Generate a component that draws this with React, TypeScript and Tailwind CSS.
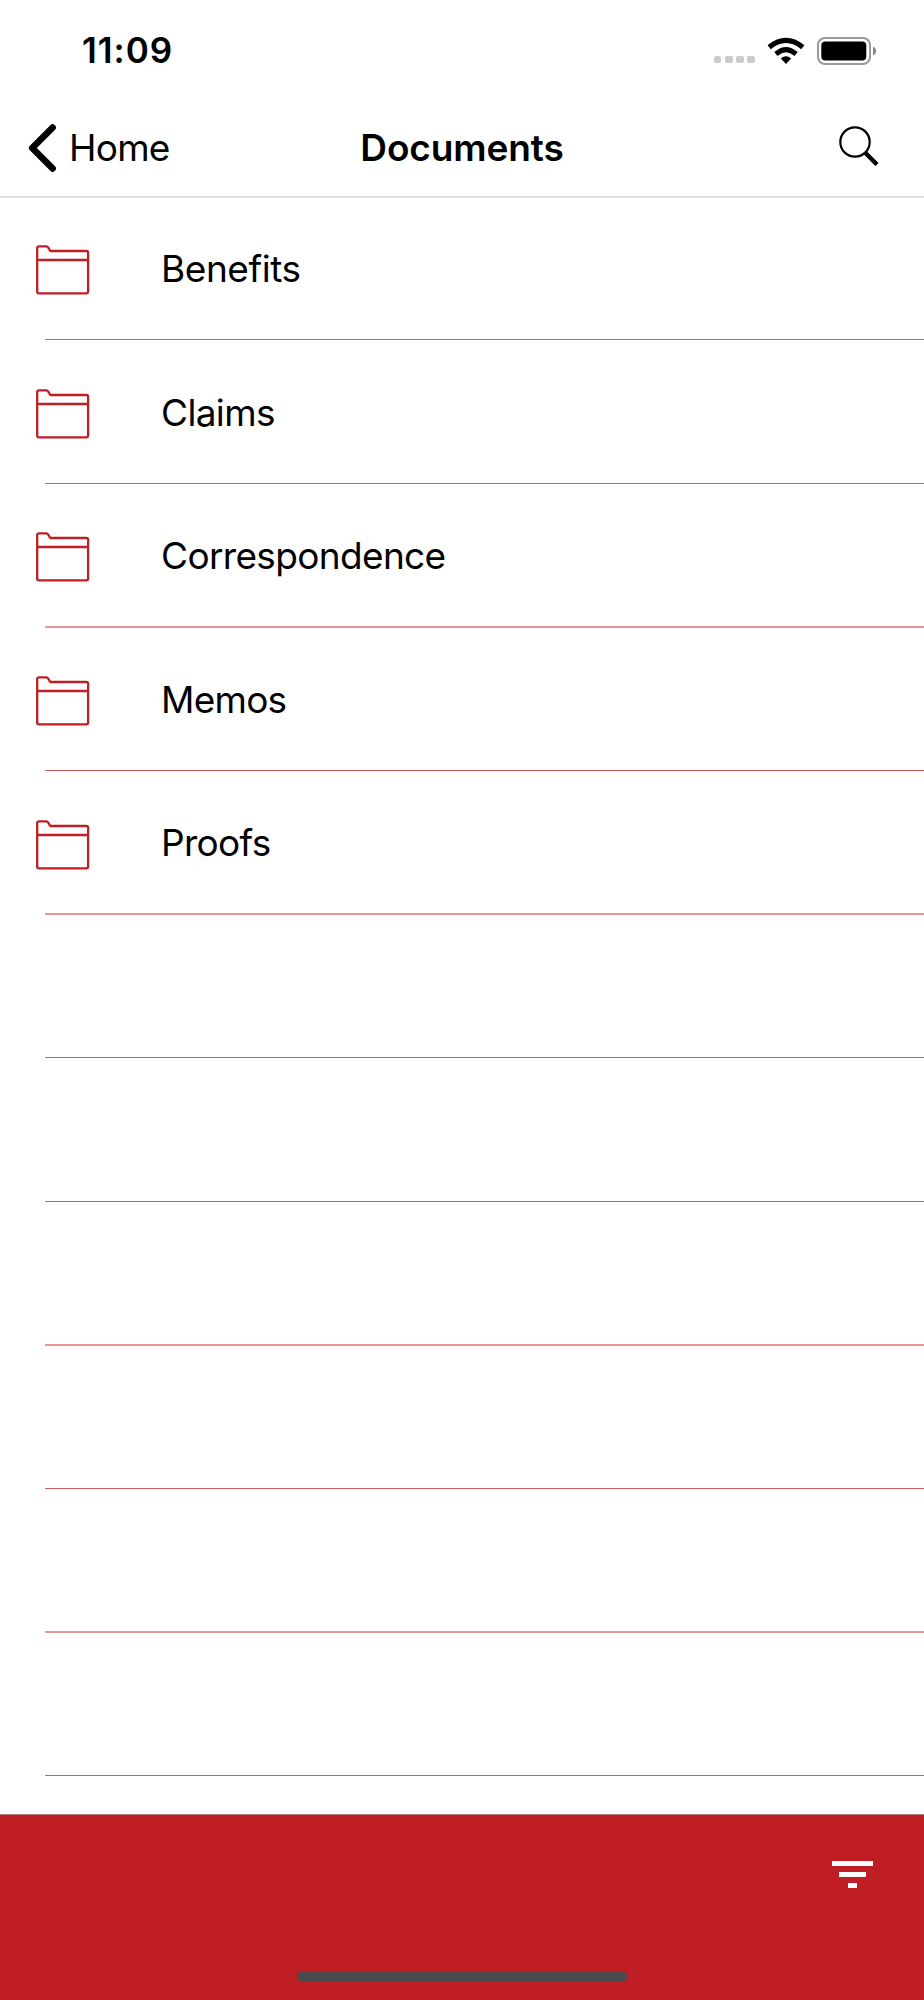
import React from "react";

type Entry = { name: string; line: string };

const soft = "-mb-[0.6px] h-[2px] bg-[#e6979a]";
const crisp = "h-px bg-[#d5595e]";

const entries: Entry[] = [
  { name: "Benefits", line: crisp },
  { name: "Claims", line: crisp },
  { name: "Correspondence", line: soft },
  { name: "Memos", line: crisp },
  { name: "Proofs", line: soft },
  { name: "", line: crisp },
  { name: "", line: crisp },
  { name: "", line: soft },
  { name: "", line: crisp },
  { name: "", line: soft },
  { name: "", line: crisp },
];

const tracking: Record<string, string> = {
  Benefits: "tracking-[-0.45px]",
  Claims: "tracking-[-0.65px]",
  Correspondence: "tracking-[-0.65px]",
  Memos: "tracking-[-0.75px]",
  Proofs: "tracking-[-0.7px]",
};

function FolderIcon() {
  return (
    <svg width="54" height="50" viewBox="0 0 54 50" fill="none" stroke="#be1e24" strokeWidth="2.3" strokeLinejoin="round" className="shrink-0">
      <path d="M1.2 15V3.3Q1.2 1.3 3 1.3H10.3Q11.5 1.3 12.1 2.4L14.3 6H50.3Q52.1 6 52.1 7.8V46.6Q52.1 48.4 50.3 48.4H3Q1.2 48.4 1.2 46.6V15H52.1" />
    </svg>
  );
}

function Row({ name, line }: Entry) {
  return (
    <li className="flex h-[143.6px] flex-col">
      <div className="flex flex-1 items-center pt-[5px] pl-9">
        {name && (
          <>
            <FolderIcon />
            <span className={`mb-[4px] ml-[71px] text-[37px] leading-none ${tracking[name]}`}>{name}</span>
          </>
        )}
      </div>
      <div className={`ml-[45px] ${line}`} />
    </li>
  );
}

function StatusBar() {
  return (
    <div className="flex h-[100px] items-center justify-between pr-[47px] pl-[82px]">
      <span className="mt-px text-[35px] leading-none font-semibold tracking-[1px]">11:09</span>
      <div className="flex items-center">
        <div className="mt-[19px] flex gap-[3.5px]">
          {[0, 1, 2, 3].map((i) => (
            <span key={i} className="size-[7.7px] rounded-[2px] bg-[#cbcbcb]" />
          ))}
        </div>
        <svg width="38" height="28" viewBox="0 0 38 28" className="mt-px ml-3" fill="none" stroke="#000" strokeWidth="5">
          <path d="M2.2 10.2Q19 -3.4 35.8 10.2" />
          <path d="M8.9 17Q19 8.2 29.1 17" />
          <path d="M13.8 21.6Q19 17 24.2 21.6L19 27Z" fill="#000" stroke="none" />
        </svg>
        <svg width="60" height="28" viewBox="0 0 60 28" className="mt-px ml-3">
          <rect x="1" y="1" width="52" height="26" rx="7" fill="none" stroke="#999" strokeWidth="2" />
          <rect x="4.3" y="4.5" width="45" height="19" rx="4" />
          <path d="M56 9.5Q59 11 59 14Q59 17 56 18.5Z" fill="#888" />
        </svg>
      </div>
    </div>
  );
}

function NavBar() {
  return (
    <div className="grid h-[96px] grid-cols-3 items-center">
      <div className="flex items-center pl-[28px]">
        <svg width="30" height="48" viewBox="0 0 30 48" fill="none" stroke="#000" strokeWidth="6.6" strokeLinecap="round" strokeLinejoin="round">
          <path d="M24.6 3.6L4.2 24L24.6 44.4" />
        </svg>
        <span className="mb-[2px] ml-[11px] text-[37px] leading-none font-normal tracking-[-0.75px]">Home</span>
      </div>
      <h1 className="mb-[2px] text-center text-[37px] leading-none font-semibold tracking-[-0.1px]">Documents</h1>
      <div className="mb-[4px] flex justify-end pr-[45px]">
        <svg width="40" height="40" viewBox="0 0 40 40" fill="none" stroke="#000">
          <circle cx="16" cy="16" r="14.7" strokeWidth="2.2" />
          <path d="M26 26.5L38 38.5" strokeWidth="4.4" />
        </svg>
      </div>
    </div>
  );
}

export default function App() {
  return (
    <div className="flex h-[2000px] w-[924px] flex-col overflow-hidden bg-white font-['Inter',sans-serif] text-black">
      <header className="h-[198px] shrink-0 border-b-2 border-[#dfdfdf]">
        <StatusBar />
        <NavBar />
      </header>
      <ul className="-mt-[1.4px] h-[1617.4px] shrink-0 overflow-hidden">
        {entries.map((e, i) => (
          <Row key={i} {...e} />
        ))}
      </ul>
      <footer className="flex flex-1 flex-col items-center justify-between border-t border-[#b08080] bg-[#be1e24] pb-[18px]">
        <div className="mt-[46px] mr-[51px] flex flex-col items-center gap-[6px] self-end">
          <span className="h-[5px] w-[41px] bg-white" />
          <span className="h-[5px] w-[27px] bg-white" />
          <span className="h-[5px] w-[9px] bg-white" />
        </div>
        <div className="h-[11px] w-[330px] rounded-full bg-[#4a4a4a]" />
      </footer>
    </div>
  );
}
